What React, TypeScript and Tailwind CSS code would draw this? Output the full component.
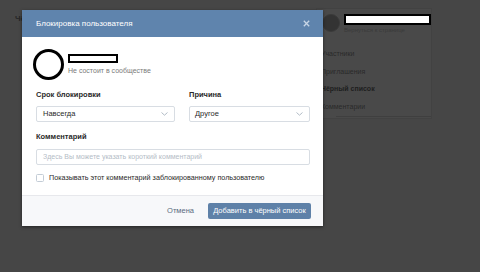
import React from "react";

const font = { fontFamily: '"Liberation Sans", Arial, sans-serif' };

function Chevron() {
  return (
    <svg width="7" height="4" viewBox="0 0 7 4" fill="none">
      <path d="M0.5 0.5 L3.5 3.2 L6.5 0.5" stroke="#a9b4c0" strokeWidth="0.9" />
    </svg>
  );
}

export default function App() {
  return (
    <div
      className="relative w-[480px] h-[272px] overflow-hidden bg-[#464646]"
      style={font}
    >
      {/* dimmed page underneath */}
      <div className="flex pt-[8px] pl-[7px] gap-[7px]">
        <div className="w-[302px] h-[250px] pl-[8px] pt-[6px]">
          <div className="text-[8px] text-[#262626] font-bold leading-[10px]">
            Чёрный список
          </div>
        </div>
        <div className="w-[116px] h-[111px] bg-[#494949] border border-[#424242] flex flex-col">
          <div className="flex items-start pt-[5px] pl-[5px] gap-[4px]">
            <div className="w-[18px] h-[18px] rounded-full bg-[#333] border border-[#3a3a3a]" />
            <div className="flex flex-col">
              <div className="w-[87px] h-[11px] bg-white border-2 border-black" />
              <div className="text-[6px] leading-[8px] text-[#3a3a3a] mt-[1px]">
                Вернуться к странице
              </div>
            </div>
          </div>
          <div className="flex flex-col pl-[4px] mt-[15px] gap-[8px] text-[7px] leading-[9.5px] text-[#2a2a2a]">
            <div>Участники</div>
            <div>Приглашения</div>
            <div className="font-bold text-[#1e1e1e]">Чёрный список</div>
            <div>Комментарии</div>
          </div>
          <div className="mt-auto ml-[19px] h-px bg-[#3f3f3f] mb-[1px]" />
        </div>
      </div>

      {/* modal dialog */}
      <div className="absolute left-[22px] top-[10px] w-[301px] h-[216px] bg-white flex flex-col shadow-[0_1px_3px_rgba(0,0,0,0.5)]">
        <div className="h-[27px] bg-[#5f84ad] flex items-center justify-between pl-[14px] pr-[13px]">
          <span className="text-[8px] text-white leading-none">
            Блокировка пользователя
          </span>
          <svg width="7" height="7" viewBox="0 0 7 7">
            <path d="M0.8 0.8 L6.2 6.2 M6.2 0.8 L0.8 6.2" stroke="#c8d6e6" strokeWidth="1.3" />
          </svg>
        </div>

        <div className="h-[158px] flex flex-col pl-[14px] pr-[13px] pt-[12px]">
          <div className="flex items-start -ml-[3px]">
            <div className="w-[31px] h-[31px] rounded-full border-[3px] border-black bg-white" />
            <div className="flex flex-col ml-[4px] pt-[5px]">
              <div className="w-[50px] h-[9px] border-2 border-black bg-white" />
              <div className="text-[7px] leading-[9px] text-[#7a7a7a] mt-[3px]">
                Не состоит в сообществе
              </div>
            </div>
          </div>

          <div className="grid grid-cols-[139px_121px] gap-x-[14px] mt-[11px]">
            <div className="text-[7.5px] leading-[8px] font-bold text-[#2a2a2a]">
              Срок блокировки
            </div>
            <div className="text-[7.5px] leading-[8px] font-bold text-[#2a2a2a]">
              Причина
            </div>
            <div className="mt-[7px] h-[16px] border border-[#d8dde3] rounded-[2px] flex items-center justify-between pl-[6px] pr-[6px] text-[7.5px] text-[#2a2a2a]">
              <span>Навсегда</span>
              <Chevron />
            </div>
            <div className="mt-[7px] h-[16px] border border-[#d8dde3] rounded-[2px] flex items-center justify-between pl-[5px] pr-[6px] text-[7.5px] text-[#2a2a2a]">
              <span>Другое</span>
              <Chevron />
            </div>
          </div>

          <div className="mt-[11px] text-[7.5px] leading-[8px] font-bold text-[#2a2a2a]">
            Комментарий
          </div>
          <div className="mt-[8px] w-[274px] h-[16px] border border-[#d8dde3] rounded-[2px] flex items-center pl-[6px] text-[7px] text-[#b4bcc6]">
            Здесь Вы можете указать короткий комментарий
          </div>

          <div className="mt-[8px] flex items-center gap-[5px]">
            <div className="w-[8px] h-[8px] border border-[#c3ccd6] rounded-[1.5px] bg-white" />
            <span className="text-[7.2px] leading-[9px] text-[#2a2a2a]">
              Показывать этот комментарий заблокированному пользователю
            </span>
          </div>
        </div>

        <div className="flex-1 border-t border-[#e7e8ec] bg-[#f7f8fa] flex items-center justify-end pr-[12px]">
          <span className="text-[7.5px] text-[#5a6b80] mr-[14px]">Отмена</span>
          <div className="w-[103px] h-[16px] bg-[#5e81a8] rounded-[2px] flex items-center justify-center text-[7.5px] text-white">
            Добавить в чёрный список
          </div>
        </div>
      </div>
    </div>
  );
}
